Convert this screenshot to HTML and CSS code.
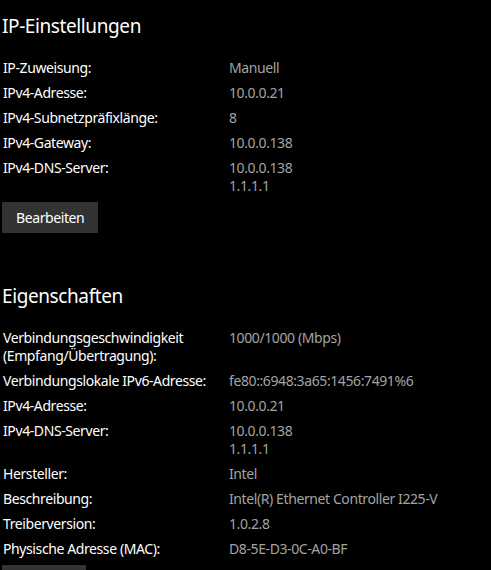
FILE: index.html
```html
<!DOCTYPE html>
<html lang="de">
<head>
<meta charset="utf-8">
<title>Netzwerkeigenschaften</title>
<link rel="stylesheet" href="styles.css">
</head>
<body>
<main class="page">
  <section class="block">
    <h2 class="title">IP-Einstellungen</h2>
    <div class="props">
      <div class="label">IP-Zuweisung:</div><div class="value">Manuell</div>
      <div class="label">IPv4-Adresse:</div><div class="value">10.0.0.21</div>
      <div class="label">IPv4-Subnetzpräfixlänge:</div><div class="value">8</div>
      <div class="label">IPv4-Gateway:</div><div class="value">10.0.0.138</div>
      <div class="label">IPv4-DNS-Server:</div><div class="value">10.0.0.138<br>1.1.1.1</div>
    </div>
    <button class="btn" type="button">Bearbeiten</button>
  </section>
  <section class="block block-second">
    <h2 class="title">Eigenschaften</h2>
    <div class="props">
      <div class="label">Verbindungsgeschwindigkeit (Empfang/Übertragung):</div><div class="value">1000/1000 (Mbps)</div>
      <div class="label">Verbindungslokale IPv6-Adresse:</div><div class="value">fe80::6948:3a65:1456:7491%6</div>
      <div class="label">IPv4-Adresse:</div><div class="value">10.0.0.21</div>
      <div class="label">IPv4-DNS-Server:</div><div class="value">10.0.0.138<br>1.1.1.1</div>
      <div class="label">Hersteller:</div><div class="value">Intel</div>
      <div class="label">Beschreibung:</div><div class="value">Intel(R) Ethernet Controller I225-V</div>
      <div class="label">Treiberversion:</div><div class="value">1.0.2.8</div>
      <div class="label">Physische Adresse (MAC):</div><div class="value">D8-5E-D3-0C-A0-BF</div>
    </div>
    <button class="btn" type="button">Kopieren</button>
  </section>
</main>
</body>
</html>
```

FILE: styles.css
```css
html, body {
  margin: 0;
  padding: 0;
  background: #000;
}

body {
  font-family: "Noto Sans", "Open Sans", "DejaVu Sans", sans-serif;
  font-size: 14px;
  letter-spacing: -0.4px;
  color: #fff;
  overflow: hidden;
  height: 570px;
}

.page {
  padding: 12px 0 0 2px;
}

.block {
  display: flex;
  flex-direction: column;
  align-items: flex-start;
}

.block-second {
  margin-top: 49px;
}

.title {
  margin: 0;
  font-size: 19px;
  line-height: 28px;
  font-weight: 400;
  letter-spacing: -0.4px;
  color: #fff;
}

.props {
  margin-top: 19px;
  display: grid;
  grid-template-columns: 227px auto;
  row-gap: 7px;
  line-height: 18px;
}

.label {
  padding-left: 1px;
  padding-right: 12px;
  color: #fff;
}

.value {
  color: #a3a3a3;
}

.btn {
  margin-top: 7px;
  height: 31px;
  padding: 0 14px;
  border: none;
  background: #333;
  color: #fff;
  font-family: inherit;
  font-size: 14px;
  letter-spacing: inherit;
  line-height: 31px;
}
```
